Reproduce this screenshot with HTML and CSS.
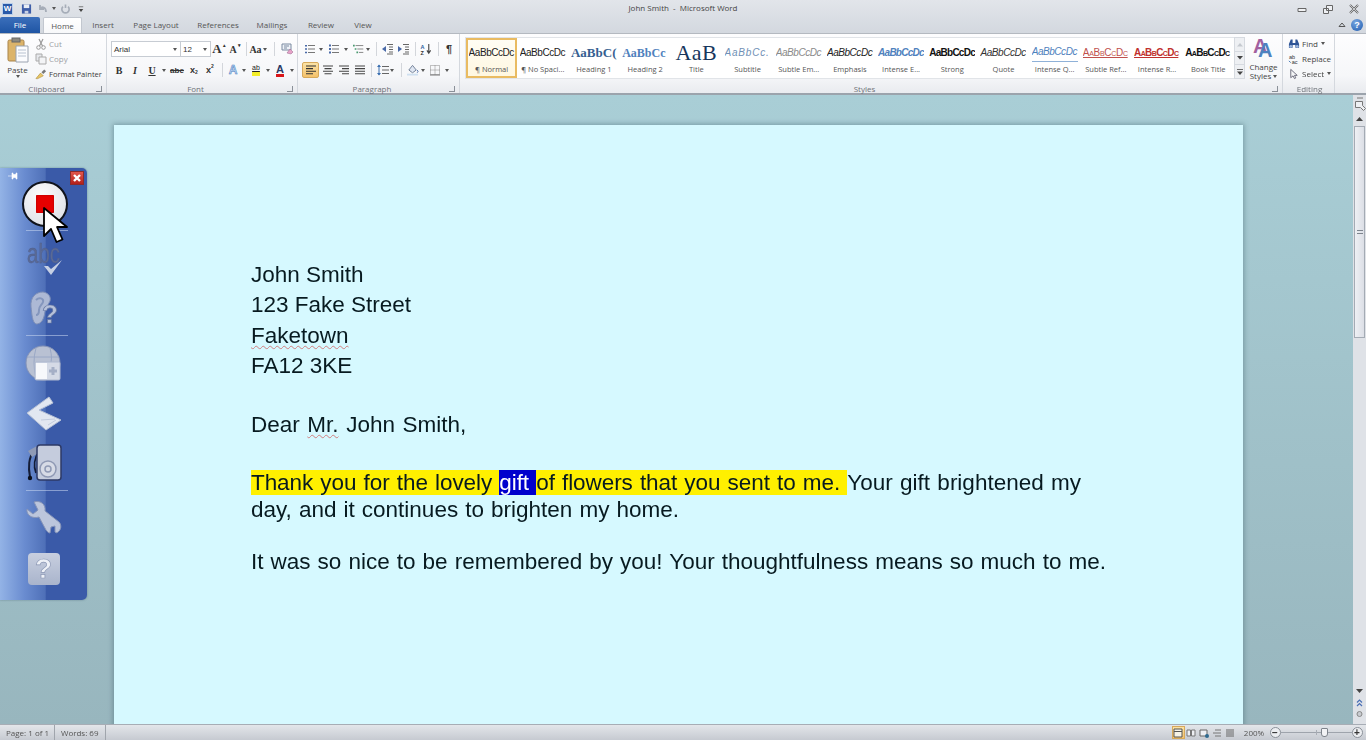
FILE: index.html
```html
<!DOCTYPE html>
<html lang="en">
<head>
<meta charset="utf-8">
<title>John Smith - Microsoft Word</title>
<link rel="stylesheet" href="styles.css">
</head>
<body>
<div class="app">
  <header class="chrome">
    <div class="titlebar">
      <div class="qat">
        <span class="wordlogo">W</span>
        <svg class="q q-save" viewBox="0 0 12 12"><path d="M1 1h10v10H1z" fill="#3f5ea8"/><path d="M3 1h6v4H3z" fill="#e8edf5"/><path d="M4 8h4v3H4z" fill="#c9d2e4"/></svg>
        <svg class="q q-undo" viewBox="0 0 12 12"><path d="M3 2v4h4M3 6c2-3 6-2 6 3" fill="none" stroke="#a6adb8" stroke-width="1.8"/></svg>
        <i class="caret q-c1"></i>
        <svg class="q q-redo" viewBox="0 0 12 12"><path d="M3.2 3.4a4 4 0 1 0 5.6 0M6 1v4" fill="none" stroke="#a6adb8" stroke-width="1.8"/></svg>
        <svg class="q q-more" viewBox="0 0 8 12"><path d="M1 3h6" stroke="#555" fill="none"/><path d="M1 6h6L4 10z" fill="#444"/></svg>
      </div>
      <div class="doctitle">John Smith &nbsp;-&nbsp; Microsoft Word</div>
      <div class="winbtns">
        <svg class="wb" viewBox="0 0 12 10"><path d="M2 4.500h8v3H2z" fill="#f2f3f5" stroke="#666"/></svg>
        <svg class="wb" viewBox="0 0 12 10"><path d="M4.500 1.500h6v5h-6zM1.500 4.500h5v5h-5z" fill="#eef0f3" stroke="#666"/></svg>
        <svg class="wb" viewBox="0 0 12 10"><path d="M2 1l8 8M10 1L2 9" stroke="#666" stroke-width="2"/><path d="M2 1l8 8M10 1L2 9" stroke="#eef0f3" stroke-width=".7"/></svg>
      </div>
    </div>
    <nav class="tabs">
      <span class="tab tab-file">File</span>
      <span class="tab tab-home">Home</span>
      <span class="tab tab-insert">Insert</span>
      <span class="tab tab-layout">Page Layout</span>
      <span class="tab tab-refs">References</span>
      <span class="tab tab-mail">Mailings</span>
      <span class="tab tab-review">Review</span>
      <span class="tab tab-view">View</span>
      <span class="tabspace"></span>
      <svg class="collapse" viewBox="0 0 8 8"><path d="M1 5.500L4 2l3 3.500z" fill="none" stroke="#555"/></svg>
      <span class="helpbtn">?</span>
    </nav>
  </header>

  <section class="ribbon">
    <div class="group g-clip">
      <div class="gbody clipbody">
        <div class="paste">
          <svg class="pasteicon" viewBox="0 0 22 26"><rect x="1" y="3" width="16" height="21" rx="1.500" fill="#dcb46a" stroke="#a8834a"/><rect x="5" y="1" width="8" height="4" fill="#8d8a80" stroke="#666"/><path d="M9 9h12v16H9z" fill="#fbfcfe" stroke="#9aa3b0"/><path d="M11 13h8M11 16h8M11 19h8" stroke="#b8c2d0"/></svg>
          <span class="pastelabel">Paste</span>
          <i class="caret"></i>
        </div>
        <div class="cliprows">
          <div class="cliprow off"><svg class="sm" viewBox="0 0 12 12"><path d="M4 1l3.500 7M8 1L4.500 8" stroke="#9a9a9a" fill="none" stroke-width="1.200"/><circle cx="3.500" cy="9.500" r="1.800" fill="none" stroke="#9a9a9a"/><circle cx="8.500" cy="9.500" r="1.800" fill="none" stroke="#9a9a9a"/></svg><span>Cut</span></div>
          <div class="cliprow off"><svg class="sm" viewBox="0 0 12 12"><path d="M1 1h6v7H1z" fill="#e6e8ec" stroke="#aaa"/><path d="M4 4h7v7H4z" fill="#f3f4f6" stroke="#aaa"/></svg><span>Copy</span></div>
          <div class="cliprow fp"><svg class="sm" viewBox="0 0 13 12"><path d="M1 11l5-6 3 3-6 3z" fill="#e9c768" stroke="#a6852f" stroke-width=".6"/><path d="M7 4l3-3 2 2-3 3z" fill="#777"/></svg><span>Format Painter</span></div>
        </div>
      </div>
      <div class="glabel"><span>Clipboard</span><i class="launch"></i></div>
    </div>

    <div class="group g-font">
      <div class="gbody rows">
        <div class="row">
          <span class="combo c-font">Arial<i class="caret"></i></span>
          <span class="combo c-size">12<i class="caret"></i></span>
          <span class="t w16 ti big">A<sup>▴</sup></span>
          <span class="t w16 ti mid">A<sup>▾</sup></span>
          <i class="sep w6"></i>
          <span class="t w18 ti aa">Aa<i class="caret"></i></span>
          <i class="sep w14"></i>
          <span class="t w12"><svg class="ic" viewBox="0 0 12 12"><path d="M1 1h9v6H1z" fill="#eef2f8" stroke="#7b8aa0"/><path d="M3 3h5M3 5h3" stroke="#7b8aa0"/><path d="M6 10l3-4 3 3-2 2z" fill="#e7a3c8" stroke="#96608a" stroke-width=".5"/></svg></span>
        </div>
        <div class="row">
          <span class="t w16 ti bold">B</span>
          <span class="t w16 ti ital">I</span>
          <span class="t w18 ti under">U</span>
          <span class="t w6"><i class="caret"></i></span>
          <span class="t w20 ti strike">abe</span>
          <span class="t w14 ti xs">x<sub>2</sub></span>
          <span class="t w18 ti xs">x<sup>2</sup></span>
          <i class="sep w6"></i>
          <span class="t w16 ti fxa">A</span>
          <span class="t w6"><i class="caret"></i></span>
          <span class="t w18"><span class="hl">ab</span></span>
          <span class="t w6"><i class="caret"></i></span>
          <span class="t w18"><span class="acol">A</span></span>
          <span class="t w6"><i class="caret"></i></span>
        </div>
      </div>
      <div class="glabel"><span>Font</span><i class="launch"></i></div>
    </div>

    <div class="group g-para">
      <div class="gbody rows">
        <div class="row">
          <span class="t w16"><svg class="ic" viewBox="0 0 12 12"><path d="M4 2.500h7M4 6h7M4 9.500h7" stroke="#777"/><path d="M1 2h2v1.500H1zM1 5.200h2v1.500H1zM1 8.800h2v1.500H1z" fill="#4a6aa8"/></svg></span>
          <span class="t w6"><i class="caret"></i></span>
          <span class="t w19"><svg class="ic" viewBox="0 0 12 12"><path d="M4 2.500h7M4 6h7M4 9.500h7" stroke="#777"/><path d="M1 1.500h2v2H1zM1 5h2v2H1zM1 8.500h2v2H1z" fill="#4a6aa8"/></svg></span>
          <span class="t w6"><i class="caret"></i></span>
          <span class="t w24"><svg class="ic" viewBox="0 0 14 12"><path d="M3 2h9M5 6h7M7 10h5" stroke="#777"/><path d="M0 1h2v2H0zM2 5h2v2H2zM4 9h2v2H4z" fill="#4a9a70"/></svg><i class="caret"></i></span>
          <i class="sep w6"></i>
          <span class="t w18"><svg class="ic" viewBox="0 0 12 12"><path d="M5 1.500h6M7 4h4M7 6.500h4M7 9h4M5 11h6" stroke="#666"/><path d="M0 6l4-3v6z" fill="#4a6aa8"/></svg></span>
          <span class="t w14"><svg class="ic" viewBox="0 0 12 12"><path d="M5 1.500h6M7 4h4M7 6.500h4M7 9h4M5 11h6" stroke="#666"/><path d="M4 6L0 3v6z" fill="#4a6aa8"/></svg></span>
          <i class="sep w8"></i>
          <span class="t w14"><svg class="ic" viewBox="0 0 12 13"><path d="M9 1v9M7 8l2 3 2-3" stroke="#444" fill="none" stroke-width="1.200"/><text x="0" y="6" class="sortt a">A</text><text x="0" y="12.500" class="sortt z">Z</text></svg></span>
          <i class="sep w10"></i>
          <span class="t w12 ti pil">¶</span>
        </div>
        <div class="row">
          <span class="t w17 on"><svg class="ic" viewBox="0 0 12 10"><path d="M1 1h10M1 3.600h7M1 6.200h10M1 8.800h7" stroke="#333" stroke-width="1.100"/></svg></span>
          <span class="t w17"><svg class="ic" viewBox="0 0 12 10"><path d="M1 1h10M2.500 3.600h7M1 6.200h10M2.500 8.800h7" stroke="#444" stroke-width="1.100"/></svg></span>
          <span class="t w16"><svg class="ic" viewBox="0 0 12 10"><path d="M1 1h10M4 3.600h7M1 6.200h10M4 8.800h7" stroke="#444" stroke-width="1.100"/></svg></span>
          <span class="t w16"><svg class="ic" viewBox="0 0 12 10"><path d="M1 1h10M1 3.600h10M1 6.200h10M1 8.800h10" stroke="#444" stroke-width="1.100"/></svg></span>
          <i class="sep w6"></i>
          <span class="t w22"><svg class="ic" viewBox="0 0 12 12"><path d="M2 1v10" stroke="#3a6fb0"/><path d="M0 3l2-2.500L4 3zM0 9l2 2.500L4 9z" fill="#3a6fb0"/><path d="M5 2.500h7M5 6h7M5 9.500h7" stroke="#666"/></svg><i class="caret"></i></span>
          <i class="sep w10"></i>
          <span class="t w14"><svg class="ic" viewBox="0 0 13 12"><path d="M2 6l4-5 4 5-4 3z" fill="#dfe6f2" stroke="#6d7c94"/><path d="M0 10h12v2H0z" fill="#cfe0f0"/><path d="M11 6q2 2 0 3" fill="none" stroke="#4a6aa8"/></svg></span>
          <span class="t w6"><i class="caret"></i></span>
          <span class="t w18"><svg class="ic" viewBox="0 0 12 12"><path d="M1.500 1.500h9v9h-9zM6 1.500v9M1.500 6h9" fill="none" stroke="#888" stroke-dasharray="1 1"/><path d="M1 11h10" stroke="#777"/></svg></span>
          <span class="t w6"><i class="caret"></i></span>
        </div>
      </div>
      <div class="glabel"><span>Paragraph</span><i class="launch"></i></div>
    </div>

    <div class="group g-styles">
      <div class="gbody stylebody">
        <div class="gallery">
          <div class="stylecell sel"><span class="pv s-normal">AaBbCcDc</span><span class="sl">¶ Normal</span></div>
          <div class="stylecell"><span class="pv s-normal">AaBbCcDc</span><span class="sl">¶ No Spaci...</span></div>
          <div class="stylecell"><span class="pv s-h1">AaBbC(</span><span class="sl">Heading 1</span></div>
          <div class="stylecell"><span class="pv s-h2">AaBbCc</span><span class="sl">Heading 2</span></div>
          <div class="stylecell"><span class="pv s-title">AaB</span><span class="sl">Title</span></div>
          <div class="stylecell"><span class="pv s-sub">AaBbCc.</span><span class="sl">Subtitle</span></div>
          <div class="stylecell"><span class="pv s-subem">AaBbCcDc</span><span class="sl">Subtle Em...</span></div>
          <div class="stylecell"><span class="pv s-em">AaBbCcDc</span><span class="sl">Emphasis</span></div>
          <div class="stylecell"><span class="pv s-inte">AaBbCcDc</span><span class="sl">Intense E...</span></div>
          <div class="stylecell"><span class="pv s-strong">AaBbCcDc</span><span class="sl">Strong</span></div>
          <div class="stylecell"><span class="pv s-em s-quote">AaBbCcDc</span><span class="sl">Quote</span></div>
          <div class="stylecell"><span class="pv s-iq">AaBbCcDc</span><span class="sl">Intense Q...</span></div>
          <div class="stylecell"><span class="pv s-caps s-sr">AaBbCcDc</span><span class="sl">Subtle Ref...</span></div>
          <div class="stylecell"><span class="pv s-caps s-ir">AaBbCcDc</span><span class="sl">Intense R...</span></div>
          <div class="stylecell"><span class="pv s-caps s-bt">AaBbCcDc</span><span class="sl">Book Title</span></div>
        </div>
        <div class="galscroll">
          <span class="gs"><svg viewBox="0 0 7 4"><path d="M3.500 0L7 4H0z" fill="#c5c9cf"/></svg></span>
          <span class="gs"><svg viewBox="0 0 7 4"><path d="M3.500 4L7 0H0z" fill="#444"/></svg></span>
          <span class="gs"><svg viewBox="0 0 7 7"><path d="M0 0h7v1H0z" fill="#555"/><path d="M3.500 7L7 3H0z" fill="#444"/></svg></span>
        </div>
        <div class="change">
          <svg class="changeicon" viewBox="0 0 24 23"><text x="1" y="16" class="ca1">A</text><text x="6" y="20" class="ca2">A</text></svg>
          <span class="changelabel">Change<br>Styles <i class="caret"></i></span>
        </div>
      </div>
      <div class="glabel"><span>Styles</span><i class="launch"></i></div>
    </div>

    <div class="group g-edit">
      <div class="gbody editrows">
        <div class="cliprow"><svg class="sm" viewBox="0 0 13 12"><path d="M1 6l2-5h2v4h3V1h2l2 5v4H8V7H5v3H1z" fill="#2f5597"/><circle cx="3" cy="8.500" r="1.500" fill="#9db7de"/><circle cx="10" cy="8.500" r="1.500" fill="#9db7de"/></svg><span>Find</span><i class="caret"></i></div>
        <div class="cliprow"><svg class="sm" viewBox="0 0 13 12"><text x="1" y="5.500" class="rp">ab</text><text x="4" y="11.500" class="rp">ac</text><path d="M1 8l2 2" stroke="#3a6fb0"/></svg><span>Replace</span></div>
        <div class="cliprow"><svg class="sm" viewBox="0 0 13 12"><path d="M3 1v9l2.500-2 1.500 3 1.500-.8L7 7.500h3z" fill="#f5f6f8" stroke="#667"/></svg><span>Select</span><i class="caret"></i></div>
      </div>
      <div class="glabel plain"><span>Editing</span></div>
    </div>
  </section>

  <main class="workspace">
    <div class="canvas">
      <article class="page">
        <p class="address">John Smith<br>123 Fake Street<br><span class="spell">Faketown</span><br>FA12 3KE</p>
        <p class="salute">Dear <span class="spell grammar">Mr.</span> John Smith,</p>
        <p class="para">
          <span class="line l1"><span class="mark">Thank you for the lovely <span class="sel-word">gift </span>of flowers that you sent to me. </span>Your gift brightened my</span>
          <span class="line l2">day, and it continues to brighten my home.</span>
        </p>
        <p class="para para-last"><span class="line l3">It was so nice to be remembered by you! Your thoughtfulness means so much to me.</span></p>
      </article>
    </div>
    <aside class="scrollbar">
      <svg class="rulerbtn" viewBox="0 0 12 16"><path d="M3 1h6" stroke="#777"/><path d="M1.500 4.500h7v4l3 3-2 2-3-3h-5z" fill="#eef0f3" stroke="#777"/></svg>
      <svg class="sarrow" viewBox="0 0 7 4"><path d="M3.500 0L7 4H0z" fill="#444"/></svg>
      <div class="thumb"><i></i></div>
      <div class="track"></div>
      <svg class="sarrow" viewBox="0 0 7 4"><path d="M3.500 4L7 0H0z" fill="#444"/></svg>
      <svg class="sdot" viewBox="0 0 7 8"><path d="M1 3.500L3.500 1 6 3.500M1 7L3.500 4.500 6 7" fill="none" stroke="#4a6fb5" stroke-width="1.200"/></svg>
      <svg class="sdot" viewBox="0 0 7 8"><circle cx="3.500" cy="4" r="2.500" fill="#c9ccd1" stroke="#888"/></svg>
    </aside>

    <aside class="palette">
      <div class="palhead">
        <svg class="pin" viewBox="0 0 10 8"><path d="M0 4h4M4 1h1v6H4zM5 2.500h3v3H5zM8 1h1v6H8z" stroke="#fff" fill="#fff" stroke-width=".6"/></svg>
        <span class="close"><svg viewBox="0 0 10 10"><path d="M2 2l6 6M8 2l-6 6" stroke="#fff" stroke-width="2.400"/></svg></span>
      </div>
      <div class="slot s-rec"><span class="rec"><i></i></span></div>
      <i class="palsep sep-rec"></i>
      <div class="slot s-abc">
        <svg class="pi" viewBox="0 0 44 44"><text x="5" y="27" class="abc" textLength="33" lengthAdjust="spacingAndGlyphs">abc</text><path d="M22 30l7 9 11-15-11 9-3-3z" fill="#c6d0e4"/></svg>
      </div>
      <div class="slot s-ear">
        <svg class="pi" viewBox="0 0 44 44"><path d="M9 20C8 10 14 5 21 5c6 1 8 5 7 9-2 4-4 6-5 10-1 9-4 13-9 13-4-2-4-10-5-17z" fill="#adb9d5" stroke="#7f90b8"/><path d="M14 13c3-3 8-2 7 2-1 3-4 4-4 8 0 3-1 5-3 5" fill="none" stroke="#8496bd" stroke-width="2"/><text x="20" y="36" class="earq">?</text></svg>
      </div>
      <i class="palsep sep-ear"></i>
      <div class="slot s-globe">
        <svg class="pi" viewBox="0 0 44 44"><circle cx="21" cy="21" r="17" fill="#b9c1d3" stroke="#8593b6"/><path d="M5 15h32M14 6q-4 14 0 30M28 6q3 12 0 16" fill="none" stroke="#9aa8c6"/><rect x="13" y="20" width="25" height="18" rx="1.500" fill="#d5dae6" stroke="#aeb8cf"/><rect x="14" y="21" width="11" height="16" fill="#f7f8fb"/><path d="M31 25v8M27 29h8" stroke="#a5afc6" stroke-width="3"/></svg>
      </div>
      <div class="slot s-scan">
        <svg class="pi" viewBox="0 0 44 44"><path d="M5 21L27 5l4 6-14 7 22 10-15 10z" fill="#e2e7f1" stroke="#b5c0d6" stroke-linejoin="round"/><path d="M19 28l14-1M26 33l8-5" stroke="#c3ccde"/></svg>
      </div>
      <div class="slot s-player">
        <svg class="pi" viewBox="0 0 44 44"><path d="M11 12C7 16 6 26 8 36" fill="none" stroke="#141c36" stroke-width="2"/><path d="M17 10c-5 8-6 14-3 22" fill="none" stroke="#141c36" stroke-width="1.800"/><circle cx="8" cy="37" r="2.200" fill="#0c0f1a"/><path d="M6 10l9-5 4 5-9 6z" fill="#8f9ab5"/><rect x="15" y="4" width="24" height="35" rx="3" fill="#c5ccdd" stroke="#2e3a66" stroke-width="1.500"/><circle cx="26" cy="28" r="8" fill="#d7dbe6" stroke="#8f99b4" stroke-width="1.500"/><circle cx="26" cy="28" r="3" fill="none" stroke="#8f99b4" stroke-width="1.500"/></svg>
      </div>
      <i class="palsep sep-player"></i>
      <div class="slot s-wrench">
        <svg class="pi" viewBox="0 0 44 44"><path d="M5 12l6 5 5-4-4-8c6-2 12 2 11 9l14 11c3 3 2 8-1 10-1 1-2 1-3 0v-6l-4 1-1 6c-2 0-3-2-4-3L17 20c-7 2-13-2-12-8z" fill="#bcc6dc" stroke="#8795b8"/></svg>
      </div>
      <div class="slot s-help"><span class="helpbox">?</span></div>
      <svg class="cursor" viewBox="0 0 25 37"><path d="M1 1v28l7-7 5.500 13 6-2.500L14 20h10z" fill="#fff" stroke="#000" stroke-width="1.800" stroke-linejoin="round"/></svg>
    </aside>
  </main>

  <footer class="status">
    <span class="stat st-page">Page: 1 of 1</span>
    <span class="stat st-words">Words: 69</span>
    <span class="statspace"></span>
    <span class="view on"><svg viewBox="0 0 10 10"><path d="M1 1h8v8H1z" fill="#f6f3e6" stroke="#555"/><path d="M1 3.500h8" stroke="#555"/></svg></span>
    <span class="view"><svg viewBox="0 0 10 10"><path d="M1 2h3.500v6H1zM5.500 2H9v6H5.500z" fill="#eef0f4" stroke="#777"/></svg></span>
    <span class="view"><svg viewBox="0 0 10 10"><path d="M1 2h7v6H1z" fill="#eef0f4" stroke="#666"/><circle cx="8" cy="8" r="2" fill="#2f6a8f"/></svg></span>
    <span class="view"><svg viewBox="0 0 10 10"><path d="M3 2h6M1 5h8M3 8h6" stroke="#777"/></svg></span>
    <span class="view"><svg viewBox="0 0 10 10"><path d="M1 2h8M1 4h8M1 6h8M1 8h8" stroke="#666"/></svg></span>
    <span class="zoomval">200%</span>
    <span class="zbtn">−</span>
    <span class="slider"><i class="midtick"></i><i class="zthumb"></i></span>
    <span class="zbtn">+</span>
  </footer>
</div>
</body>
</html>
```

FILE: styles.css
```css
* { box-sizing: border-box; }
html, body { margin: 0; height: 100%; overflow: hidden; }
body { font-family: "Open Sans", "Liberation Sans", sans-serif; font-size: 8px; color: #444; }
i { font-style: normal; }
svg { display: block; overflow: visible; }

.app { width: 1366px; height: 740px; display: flex; flex-direction: column; overflow: hidden; filter: blur(.35px); }

/* title bar + tabs */
.chrome { height: 33px; background: linear-gradient(#e2e5ea, #d3d8df); display: flex; flex-direction: column; }
.titlebar { height: 17px; display: flex; align-items: center; position: relative; }
.qat { display: flex; align-items: center; width: 100%; padding-left: 2px; }
.wordlogo { width: 11px; height: 12px; background: #2a5aa8; border: 1px solid #bcd0ea; color: #fff; font: bold 8px/10px "Liberation Sans", sans-serif; text-align: center; }
.q { height: 12px; }
.q-save { width: 11px; margin-left: 8px; }
.q-undo { width: 12px; margin-left: 5px; }
.q-c1 { margin-left: 3px; }
.q-redo { width: 11px; margin-left: 4px; }
.q-more { width: 6px; margin-left: 7px; }
.doctitle { position: absolute; left: 0; right: 0; top: 2px; text-align: center; line-height: 12px; color: #444; }
.winbtns { display: flex; margin-right: 6px; gap: 14px; flex: none; position: relative; }
.wb { width: 12px; height: 10px; }

.tabs { height: 16px; display: flex; align-items: stretch; }
.tab { line-height: 16px; color: #555; text-align: center; flex: none; }
.tab-file { width: 40px; background: linear-gradient(#3b6fbb, #1f55a4); color: #fff; border-radius: 2px 2px 0 0; }
.tab-home { width: 39px; margin-left: 3px; background: linear-gradient(#fff, #f7f8fa); border: 1px solid #c2c7cf; border-bottom: 0; border-radius: 2px 2px 0 0; line-height: 15px; }
.tab-insert { width: 24px; margin-left: 9px; }
.tab-layout { width: 48px; margin-left: 17px; }
.tab-refs { width: 42px; margin-left: 17px; }
.tab-mail { width: 32px; margin-left: 17px; }
.tab-review { width: 28px; margin-left: 19px; }
.tab-view { width: 18px; margin-left: 19px; }
.tabspace { flex: 1; }
.collapse { width: 8px; height: 8px; align-self: center; margin-right: 5px; }
.helpbtn { width: 12px; height: 12px; border-radius: 50%; background: radial-gradient(circle at 40% 30%, #78a6e0, #1f5cb0); color: #fff; font: bold 9px/12px "Liberation Sans", sans-serif; text-align: center; align-self: center; margin-right: 3px; }

/* ribbon */
.ribbon { height: 62px; display: flex; background: linear-gradient(#fdfdfe 0, #f6f7f9 70%, #e9ebef 100%); border-top: 1px solid #b4b9c0; border-bottom: 2px solid #9ba3ac; }
.group { display: flex; flex-direction: column; flex: none; border-right: 1px solid #d4d8de; }
.g-clip { width: 107px; }
.g-font { width: 191px; }
.g-para { width: 162px; }
.g-styles { width: 823px; }
.g-edit { width: 52px; }
.gbody { height: 50px; }
.glabel { height: 9px; display: flex; align-items: center; color: #6d7278; line-height: 9px; }
.glabel span { flex: 1; text-align: center; }
.launch { width: 13px; height: 9px; position: relative; }
.launch::after { content: ""; position: absolute; left: 3px; top: 2px; width: 5px; height: 5px; border-right: 1px solid #8a9098; border-bottom: 1px solid #8a9098; }
.glabel.plain span { padding-left: 2px; }
.caret { display: inline-block; width: 0; height: 0; border: 2px solid transparent; border-top: 3px solid #555; border-bottom: 0; vertical-align: middle; flex: none; }

.clipbody { display: flex; padding: 2px 0 0 4px; }
.paste { width: 27px; display: flex; flex-direction: column; align-items: center; }
.pasteicon { width: 22px; height: 26px; margin-top: 1px; }
.pastelabel { line-height: 11px; margin-top: 1px; color: #444; }
.cliprows { margin-left: 4px; }
.cliprow { height: 15px; display: flex; align-items: center; gap: 2px; white-space: nowrap; color: #444; }
.cliprow.off span { color: #9c9fa4; }
.fp span { font-size: 7.600px; color: #3c3c3c; }
.sm { width: 12px; height: 12px; flex: none; }
.rp { font: 6px "Liberation Sans", sans-serif; fill: #333; }

.rows { padding: 7px 0 0 4px; display: flex; flex-direction: column; gap: 5px; }
.row { height: 16px; display: flex; align-items: center; }
.combo { height: 16px; background: #fff; border: 1px solid #c7ccd3; display: flex; align-items: center; justify-content: space-between; padding: 0 3px 0 2px; font: 8px "Liberation Sans", sans-serif; color: #333; flex: none; }
.c-font { width: 69px; border-right: 0; }
.c-size { width: 31px; }
.t { height: 16px; display: flex; align-items: center; justify-content: center; gap: 1px; flex: none; border: 1px solid transparent; }
.t.on { background: linear-gradient(#fbe3a6, #f5c26b); border-color: #d7a95a; border-radius: 2px; }
.w6 { width: 6px; } .w8 { width: 8px; } .w10 { width: 10px; } .w12 { width: 12px; } .w14 { width: 14px; } .w16 { width: 16px; } .w17 { width: 17px; } .w18 { width: 18px; } .w19 { width: 19px; } .w20 { width: 20px; } .w22 { width: 22px; } .w24 { width: 24px; }
.sep { display: flex; height: 14px; flex: none; justify-content: center; position: relative; }
.sep::after { content: ""; width: 1px; height: 100%; background: #d3d6db; }
.ic { width: 12px; height: 12px; flex: none; }
.row .t.on .ic, .t .ic[viewBox="0 0 12 10"] { height: 10px; }
.ti { font-family: "Liberation Serif", serif; color: #333; }
.ti sup, .ti sub { font-size: 5px; line-height: 5px; }
.ti sup { align-self: flex-start; margin-top: 1px; }
.ti sub { align-self: flex-end; margin-bottom: 2px; }
.big { font-size: 13px; font-weight: bold; }
.mid { font-size: 10px; font-weight: bold; }
.aa { font-size: 10px; font-weight: bold; }
.bold { font-size: 10px; font-weight: bold; }
.ital { font-size: 10px; font-style: italic; font-weight: bold; }
.under { font-size: 10px; font-weight: bold; text-decoration: underline; }
.strike { font-family: "Liberation Sans", sans-serif; font-size: 8px; font-weight: bold; text-decoration: line-through; }
.xs { font-family: "Liberation Sans", sans-serif; font-size: 9px; font-weight: bold; gap: 0; }
.fxa { font: bold 12px "Liberation Sans", sans-serif; color: #bcd6f2; -webkit-text-stroke: .5px #3f78bd; }
.hl { font: 7px/8px "Liberation Sans", sans-serif; color: #222; border-bottom: 4px solid #f4ee2a; display: block; text-decoration: underline; }
.acol { font: bold 11px/10px "Liberation Sans", sans-serif; color: #2a3a66; border-bottom: 3px solid #d8161a; display: block; }
.sortt { font: bold 6px "Liberation Sans", sans-serif; }
.sortt.a { fill: #2f5fa0; }
.sortt.z { fill: #333; }
.pil { font: bold 11px "Liberation Sans", sans-serif; color: #333; }

/* style gallery */
.stylebody { display: flex; padding: 3px 0 0 5px; }
.gallery { display: grid; grid-template-columns: repeat(15, 51.2px); height: 42px; background: #fff; border: 1px solid #e1e4e8; border-right: 0; flex: none; width: 769px; }
.stylecell { display: flex; flex-direction: column; align-items: center; overflow: hidden; height: 40px; }
.stylecell.sel { background: linear-gradient(#fffdf5, #fff7df); box-shadow: inset 0 0 0 2px #e9bb62; height: 40px; }
.pv { height: 22px; margin-top: 4px; line-height: 22px; width: 46px; overflow: hidden; white-space: nowrap; text-align: left; flex: none; font: 10px/22px "Liberation Sans", sans-serif; color: #222; letter-spacing: -.45px; }
.sl { line-height: 10px; color: #555; white-space: nowrap; font-size: 7.500px; }
.s-h1 { font: bold 13px/22px "Liberation Serif", serif; color: #365f91; letter-spacing: 0; }
.s-h2 { font: bold 12px/22px "Liberation Serif", serif; color: #4f81bd; letter-spacing: 0; }
.s-title { font: 22px/22px "Liberation Serif", serif; color: #17365d; width: 42px; text-align: center; letter-spacing: .4px; overflow: visible; }
.s-sub { font: italic 10px/22px "Liberation Sans", sans-serif; color: #6f8fb5; letter-spacing: .8px; }
.s-subem { font: italic 10px/22px "Liberation Sans", sans-serif; color: #8a8a8a; }
.s-em { font: italic 10px/22px "Liberation Sans", sans-serif; color: #222; }
.s-quote { color: #333; }
.s-inte { font: bold italic 10px/22px "Liberation Sans", sans-serif; color: #4f81bd; letter-spacing: -.75px; }
.s-strong { font: bold 10px/22px "Liberation Sans", sans-serif; color: #111; letter-spacing: -.75px; }
.s-iq { font: italic 10px/17px "Liberation Sans", sans-serif; color: #4f81bd; height: 17px; margin-top: 6.500px; margin-bottom: 2.500px; border-bottom: 1px solid #8fb1d8; line-height: 14px; }
.s-caps { font-variant: small-caps; text-decoration: underline; letter-spacing: -.3px; }
.s-sr { color: #c0504d; font-weight: normal; }
.s-ir { color: #c0302d; font-weight: bold; letter-spacing: -.6px; }
.s-bt { color: #111; font-weight: bold; text-decoration: none; letter-spacing: -.6px; }
.galscroll { width: 11px; height: 42px; display: flex; flex-direction: column; flex: none; border: 1px solid #d6dae0; background: #eef0f3; }
.gs { flex: 1; display: flex; align-items: center; justify-content: center; border-bottom: 1px solid #d6dae0; }
.gs:last-child { border-bottom: 0; }
.gs svg { width: 6px; height: auto; }
.change { width: 37px; display: flex; flex-direction: column; align-items: center; }
.changeicon { width: 24px; height: 23px; }
.ca1 { font: bold 20px "Liberation Sans", sans-serif; fill: #a2609f; }
.ca2 { font: bold 20px "Liberation Sans", sans-serif; fill: #4d82bf; }
.changelabel { line-height: 8.500px; text-align: center; color: #444; margin-top: 3px; }
.editrows { padding: 2px 0 0 5px; }
.editrows .caret { margin-left: 1px; }

/* workspace */
.workspace { flex: 1; min-height: 0; display: flex; position: relative; background: linear-gradient(#a9ced6, #98b6be); }
.canvas { flex: 1; min-width: 0; overflow: hidden; padding: 30px 0 0 114px; }
.page { width: 1129px; height: 800px; background: #d6f9ff; box-shadow: 0 0 5px 1px rgba(60, 95, 105, .45); padding: 135px 0 0 137px; font: 22.500px/30.300px "Liberation Sans", Arial, sans-serif; color: #071a20; }
.page p { margin: 0; }
.salute { margin-top: 29px !important; word-spacing: 1.300px; }
.para { margin-top: 30px !important; line-height: 26.500px; }
.para-last { margin-top: 26px !important; }
.line { display: block; white-space: nowrap; text-align: justify; text-align-last: justify; }
.l1 { width: 830px; }
.l2 { width: 428px; }
.l3 { width: 855px; }
.mark { background: #fff000; letter-spacing: -.08px; }
.sel-word { background: #0000cd; color: #fff; }
.spell { text-decoration: underline wavy #d27f7f 1px; text-underline-offset: 2px; }

.scrollbar { width: 13px; flex: none; background: #dfe2e7; display: flex; flex-direction: column; align-items: center; padding: 2px 0 5px; }
.rulerbtn { width: 12px; height: 16px; }
.sarrow { width: 7px; height: 4px; margin: 4px 0; flex: none; }
.sarrow:nth-child(2) { margin-bottom: 5px; }
.thumb { width: 11px; height: 212px; border: 1px solid #a4abb4; background: linear-gradient(90deg, #eef0f4, #dcdfe6); display: flex; align-items: center; justify-content: center; flex: none; }
.thumb i { width: 6px; height: 4px; border-top: 1px solid #7d848d; border-bottom: 1px solid #7d848d; }
.track { flex: 1; }
.sdot { width: 7px; height: 8px; margin: 1.500px 0; flex: none; }

/* floating palette */
.palette { position: absolute; left: 0; top: 73px; width: 87px; height: 432px; border-radius: 0 5px 5px 0; background: linear-gradient(90deg, #93b3e6 0, #6a8cd0 28%, #4f70b8 52%, #3a5aa8 53%, #3a5aa8 100%); display: flex; flex-direction: column; align-items: center; box-shadow: 0 0 2px rgba(40, 70, 90, .5); }
.palhead { width: 100%; height: 12px; display: flex; justify-content: space-between; padding: 4px 3px 0 8px; flex: none; }
.pin { width: 10px; height: 8px; }
.close { width: 14px; height: 14px; background: linear-gradient(#e0564c, #b3201a); border: 1px solid #8b2a2a; display: block; padding: 1px; margin-top: -1px; }
.slot { width: 100%; height: 50px; display: flex; align-items: center; justify-content: center; flex: none; }
.s-rec { height: 48px; }
.s-abc { height: 50px; }
.s-ear { height: 51px; }
.s-player { height: 48px; }
.pi { width: 44px; height: 44px; }
.s-wrench { margin-top: 3px; }
.s-globe { margin-top: 3px; }
.abc { font: 27px "Liberation Sans", sans-serif; fill: #5a6a96; stroke: #4e5e8b; stroke-width: .4px; }
.earq { font: bold 26px "Liberation Sans", sans-serif; fill: #b6c1da; stroke: #65769f; stroke-width: .7px; }
.rec { width: 46px; height: 46px; border-radius: 50%; background: radial-gradient(circle at 40% 30%, #fbfbfc, #d9dce3); border: 2px solid #10131c; display: flex; align-items: center; justify-content: center; margin-left: 2px; }
.rec i { width: 18px; height: 18px; background: #e60000; border-radius: 1px; box-shadow: inset 0 0 2px #900; }
.palsep { width: 42px; height: 1px; background: rgba(200, 215, 240, .55); flex: none; margin-left: 6px; }
.sep-rec { margin-top: 2px; margin-bottom: 2px; }
.sep-ear { margin-top: 1px; }
.sep-player { margin-top: 3px; }
.helpbox { width: 32px; height: 32px; border-radius: 4px; background: linear-gradient(#c8cfdf, #a9b4cc); display: flex; align-items: center; justify-content: center; color: #eef1f7; font: bold 28px/32px "Liberation Sans", sans-serif; -webkit-text-stroke: .7px #8b97b4; }
.cursor { position: absolute; left: 43px; top: 39px; width: 25px; height: 37px; }

/* status bar */
.status { height: 16px; display: flex; align-items: center; background: linear-gradient(#e3e6ea, #c6cad1); border-top: 1px solid #a7adb5; color: #555; flex: none; }
.stat { height: 100%; line-height: 15px; border-right: 1px solid #a0a5ac; flex: none; }
.st-page { width: 55px; padding-left: 6px; }
.st-words { width: 51px; padding-left: 6px; }
.statspace { flex: 1; }
.view { width: 13px; height: 13px; display: flex; align-items: center; justify-content: center; flex: none; }
.view svg { width: 10px; height: 10px; }
.view.on { background: linear-gradient(#fbe3a6, #f5c26b); border: 1px solid #d7a95a; }
.zoomval { width: 22px; margin: 0 4.500px 0 6.500px; text-align: center; flex: none; }
.zbtn { width: 11px; height: 11px; border-radius: 50%; border: 1px solid #8a9098; background: #eceef1; color: #333; font: bold 10px/9px "Liberation Sans", sans-serif; text-align: center; flex: none; }
.slider { width: 71px; height: 11px; position: relative; flex: none; }
.slider::before { content: ""; position: absolute; left: 0; right: 0; top: 5px; height: 1px; background: #9ea4ac; }
.midtick { position: absolute; left: 35px; top: 3px; width: 1px; height: 5px; background: #a8adb5; }
.zthumb { position: absolute; left: 40px; top: 1px; width: 7px; height: 9px; background: #f2f3f5; border: 1px solid #7d838b; border-radius: 1px 1px 3px 3px; }
.status > .zbtn:last-child { margin-right: 3.500px; }
```
